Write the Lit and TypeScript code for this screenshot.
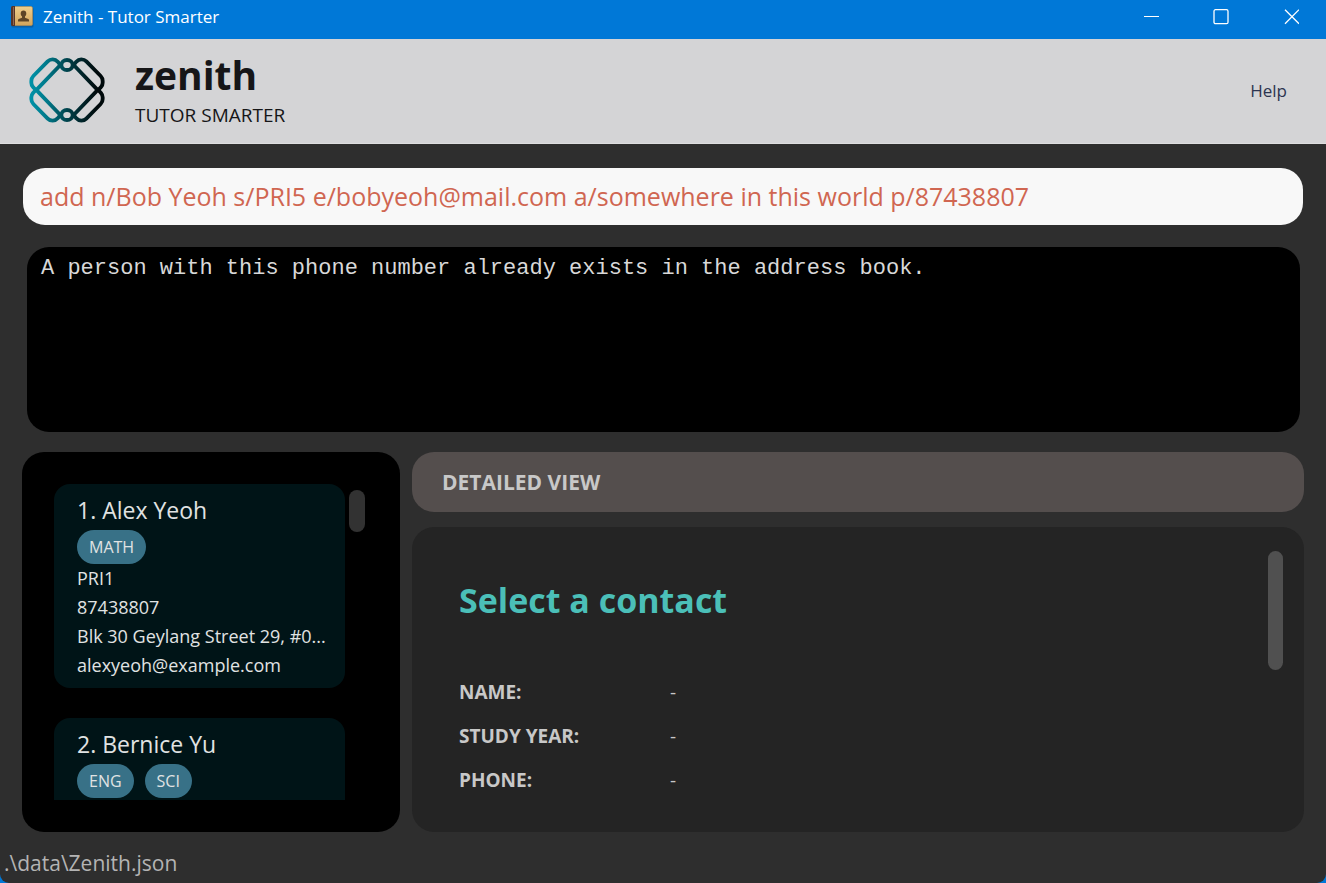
import { LitElement, html, css, svg } from "lit";
import { customElement, property, state } from "lit/decorators.js";

interface Person {
  name: string;
  tags: string[];
  year: string;
  phone: string;
  address: string;
  email: string;
}

const people: Person[] = [
  {
    name: "Alex Yeoh",
    tags: ["MATH"],
    year: "PRI1",
    phone: "87438807",
    address: "Blk 30 Geylang Street 29, #0...",
    email: "alexyeoh@example.com",
  },
  {
    name: "Bernice Yu",
    tags: ["ENG", "SCI"],
    year: "",
    phone: "",
    address: "",
    email: "",
  },
];

// One link of the logo, reflected about the centre (141, 120) by the two signs.
const logoLink = (sx: number, sy: number) => {
  const p = (x: number, y: number) => `${141 + sx * (x - 141)} ${120 + sy * (y - 120)}`;
  return [
    `M${p(48, 121)}`,
    `L${p(39, 111)}`,
    `Q${p(34, 105)} ${p(34, 98)}`,
    `L${p(34, 93)}`,
    `Q${p(34, 84)} ${p(40, 78)}`,
    `L${p(83, 34)}`,
    `Q${p(89, 28)} ${p(98, 28)}`,
    `Q${p(107, 28)} ${p(113, 35)}`,
    `L${p(121, 45)}`,
    `L${p(48, 121)}`,
  ].join(" ");
};

@customElement("window-bar")
class WindowBar extends LitElement {
  static styles = css`
    :host {
      display: flex;
      align-items: center;
      box-sizing: border-box;
      height: 39px;
      padding: 0 0 6px 11px;
      background: #0078d7;
      color: #ffffff;
      font-size: 17px;
      line-height: 33px;
    }
    .book {
      flex: none;
      margin-right: 9px;
    }
    .title {
      flex: 1;
    }
    button {
      display: flex;
      align-items: center;
      justify-content: center;
      width: 70px;
      height: 33px;
      padding: 0;
      border: 0;
      background: none;
      color: inherit;
    }
  `;

  @property() label = "";

  render() {
    return html`
      <svg class="book" width="23" height="22" viewBox="0 0 23 22" aria-hidden="true">
        <defs>
          <linearGradient id="cover" x1="0" y1="0" x2="0" y2="1">
            <stop offset="0" stop-color="#efce8c" />
            <stop offset="1" stop-color="#d2a45c" />
          </linearGradient>
        </defs>
        <rect x="0.5" y="1.5" width="22" height="20" rx="1.5" fill="#0a5596" opacity="0.7" />
        <rect x="0.5" y="0.5" width="21" height="19" rx="1.5" fill="url(#cover)" stroke="#b98d4c" stroke-width="0.6" />
        <path d="M1.5 0H4v20H1.5Q0 20 0 18.5v-17Q0 0 1.5 0z" fill="#573527" />
        <path d="M2.500 1v18" stroke="#8b6655" />
        <path
          d="M12.500 4.500c1.800 0 2.800 1.200 2.800 2.900 0 1.300-.6 2.300-1.300 2.900v1.400l3.300 1.200q.7.300.7 1.100v1.500H7v-1.500q0-.8.7-1.100L11 11.700v-1.400c-.7-.6-1.300-1.600-1.300-2.900 0-1.700 1-2.900 2.800-2.900z"
          fill="#5c4427"
        />
      </svg>
      <span class="title">${this.label}</span>
      <button aria-label="Minimize">
        <svg width="16" height="16" viewBox="0 0 16 16">
          <path d="M1 7.500h15" stroke="currentColor" />
        </svg>
      </button>
      <button aria-label="Maximize">
        <svg width="16" height="16" viewBox="0 0 16 16">
          <rect x="1" y="0.700" width="14" height="14" rx="1.500" fill="none" stroke="currentColor" stroke-width="1.300" />
        </svg>
      </button>
      <button aria-label="Close">
        <svg width="16" height="16" viewBox="0 0 16 16">
          <path d="M2 0.700l14 14M16 0.700l-14 14" stroke="currentColor" stroke-width="1.300" />
        </svg>
      </button>
    `;
  }
}

@customElement("brand-header")
class BrandHeader extends LitElement {
  static styles = css`
    :host {
      display: flex;
      align-items: center;
      box-sizing: border-box;
      height: 105px;
      padding: 0 39px 0 20px;
      border-bottom: 1px solid #dededf;
      background: #d4d4d6;
      color: #161618;
    }
    .logo {
      flex: none;
      margin-right: 15px;
    }
    .words {
      flex: 1;
    }
    h1 {
      margin: 0;
      font-size: 39px;
      line-height: 48px;
      font-weight: 700;
    }
    p {
      margin: 0;
      font-size: 19px;
      line-height: 32px;
    }
    button {
      padding: 0;
      border: 0;
      background: none;
      font: inherit;
      font-size: 17px;
      line-height: 24px;
      color: #2c3450;
    }
  `;

  render() {
    return html`
      <svg class="logo" width="100" height="80" viewBox="0 3 300 240" aria-hidden="true">
        <defs>
          <linearGradient id="teal" gradientUnits="userSpaceOnUse" x1="30" y1="0" x2="232" y2="0">
            <stop offset="0" stop-color="#0092a8" />
            <stop offset="0.25" stop-color="#00798a" />
            <stop offset="0.6" stop-color="#003a42" />
            <stop offset="1" stop-color="#00090b" />
          </linearGradient>
        </defs>
        <g fill="none" stroke="url(#teal)" stroke-width="11.500" stroke-linejoin="round">
          ${[[1, 1], [-1, 1], [1, -1], [-1, -1]].map(([sx, sy]) => svg`<path d=${logoLink(sx, sy)} />`)}
          <ellipse cx="141" cy="45" rx="17" ry="15" />
          <ellipse cx="141" cy="195" rx="17" ry="15" />
        </g>
      </svg>
      <div class="words">
        <h1>zenith</h1>
        <p>TUTOR SMARTER</p>
      </div>
      <button>Help</button>
    `;
  }
}

@customElement("person-card")
class PersonCard extends LitElement {
  static styles = css`
    :host {
      display: block;
      padding: 7px 12px 8px 23px;
      border-radius: 16px;
      background: #001417;
      color: #e0e3e3;
      font-size: 18px;
      line-height: 29px;
    }
    h2 {
      margin: 0 0 1px;
      font-size: 23px;
      line-height: 38px;
      font-weight: 400;
    }
    .tags {
      display: flex;
      gap: 11px;
    }
    .tag {
      padding: 0 12px;
      border-radius: 17px;
      background: #387187;
      font-size: 16px;
      line-height: 34px;
    }
    .line {
      min-height: 29px;
      overflow: hidden;
      text-overflow: ellipsis;
      white-space: nowrap;
    }
  `;

  @property({ type: Number }) index = 1;
  @property({ attribute: false }) person!: Person;

  render() {
    const { name, tags, year, phone, address, email } = this.person;
    return html`
      <h2>${this.index}. ${name}</h2>
      <div class="tags">${tags.map((tag) => html`<span class="tag">${tag}</span>`)}</div>
      ${[year, phone, address, email].map((text) => html`<div class="line">${text}</div>`)}
    `;
  }
}

@customElement("detail-pane")
class DetailPane extends LitElement {
  static styles = css`
    :host {
      display: flex;
      min-height: 0;
      box-sizing: border-box;
      padding: 24px 21px 24px 47px;
      border-radius: 22px;
      background: #242424;
      color: #c8c8c8;
    }
    .content {
      flex: 1;
      overflow: hidden;
    }
    h2 {
      margin: 25px 0 46px;
      color: #4bbfb8;
      font-size: 34px;
      line-height: 48px;
      font-weight: 700;
    }
    dl {
      display: grid;
      grid-template-columns: 211px 1fr;
      margin: 0;
      font-size: 19px;
      line-height: 44px;
    }
    dt {
      font-weight: 700;
    }
    dd {
      margin: 0;
    }
    .thumb {
      width: 15px;
      height: 119px;
      border-radius: 8px;
      background: #505050;
    }
  `;

  render() {
    return html`
      <div class="content">
        <h2>Select a contact</h2>
        <dl>
          ${["NAME:", "STUDY YEAR:", "PHONE:"].map((label) => html`<dt>${label}</dt><dd>-</dd>`)}
        </dl>
      </div>
      <div class="thumb"></div>
    `;
  }
}

@customElement("app-root")
class AppRoot extends LitElement {
  static styles = css`
    :host {
      display: block;
      background: #0078d7;
      font-family: "Open Sans", "Noto Sans", sans-serif;
    }
    .window {
      display: flex;
      flex-direction: column;
      height: 100vh;
      overflow: hidden;
      border-radius: 0 0 9px 9px;
      background: #2e2e2e;
    }
    window-bar,
    brand-header,
    footer {
      flex: none;
    }
    main {
      display: flex;
      flex: 1;
      flex-direction: column;
      min-height: 0;
      padding: 24px 22px 11px;
    }
    form {
      margin: 0 1px 22px;
    }
    .command {
      display: block;
      box-sizing: border-box;
      width: 100%;
      height: 57px;
      padding: 0 17px 2px;
      border: 0;
      border-radius: 22px;
      outline: 0;
      background: #f8f8f8;
      color: #d06651;
      font: inherit;
      font-size: 25px;
    }
    .result {
      flex: none;
      box-sizing: border-box;
      height: 185px;
      margin: 0 4px 20px 5px;
      padding: 7px 14px;
      border-radius: 22px;
      background: #000000;
      color: #d8d8d8;
      font-family: "Liberation Mono", monospace;
      font-size: 22px;
      line-height: 30px;
    }
    .panels {
      display: grid;
      flex: 1;
      grid-template-columns: 378fr 892fr;
      grid-template-rows: minmax(0, 1fr);
      gap: 12px;
      min-height: 0;
    }
    .people {
      display: flex;
      gap: 4px;
      box-sizing: border-box;
      min-width: 0;
      padding: 32px 35px 32px 32px;
      border-radius: 22px;
      background: #000000;
    }
    .list {
      display: flex;
      flex: 1;
      flex-direction: column;
      gap: 30px;
      min-width: 0;
      overflow: hidden;
    }
    person-card {
      flex: none;
    }
    .thumb {
      flex: none;
      width: 16px;
      height: 42px;
      margin-top: 6px;
      border-radius: 8px;
      background: #323232;
    }
    .details {
      display: flex;
      flex-direction: column;
      gap: 15px;
      min-width: 0;
    }
    .heading {
      flex: none;
      margin: 0;
      padding: 0 30px;
      border-radius: 22px;
      background: #544e4d;
      color: #c8c8c8;
      font-size: 21px;
      line-height: 60px;
      font-weight: 700;
    }
    detail-pane {
      flex: 1;
    }
    footer {
      padding: 0 4px;
      color: #b4b4b4;
      font-size: 21px;
      line-height: 40px;
    }
  `;

  @state() private command =
    "add n/Bob Yeoh s/PRI5 e/bobyeoh@mail.com a/somewhere in this world p/87438807";
  @state() private result = "A person with this phone number already exists in the address book.";

  render() {
    return html`
      <div class="window">
        <window-bar label="Zenith - Tutor Smarter"></window-bar>
        <brand-header></brand-header>
        <main>
          <form @submit=${(e: Event) => e.preventDefault()}>
            <input
              class="command"
              type="text"
              aria-label="Command"
              spellcheck="false"
              .value=${this.command}
              @input=${(e: Event) => (this.command = (e.target as HTMLInputElement).value)}
            />
          </form>
          <div class="result" role="status">${this.result}</div>
          <div class="panels">
            <section class="people">
              <div class="list">
                ${people.map((p, i) => html`<person-card .index=${i + 1} .person=${p}></person-card>`)}
              </div>
              <div class="thumb"></div>
            </section>
            <section class="details">
              <h2 class="heading">DETAILED VIEW</h2>
              <detail-pane></detail-pane>
            </section>
          </div>
        </main>
        <footer>.\\data\\Zenith.json</footer>
      </div>
    `;
  }
}
